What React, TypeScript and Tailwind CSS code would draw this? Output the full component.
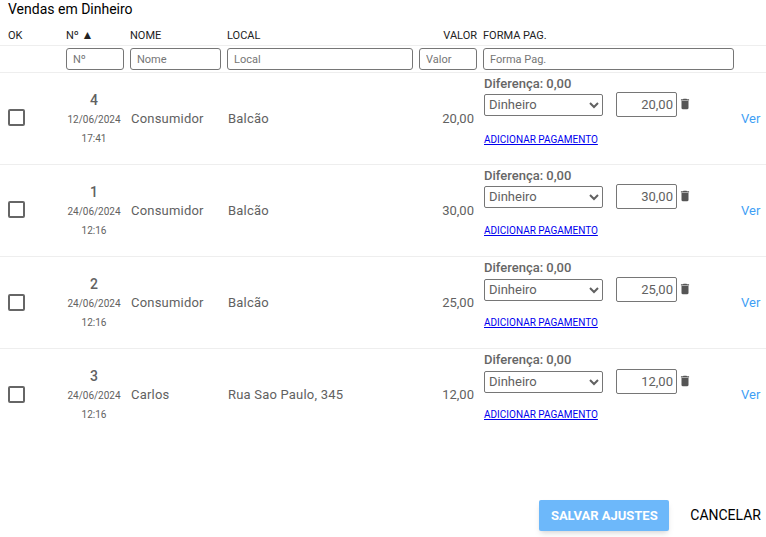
const cols = "grid grid-cols-[52px_58px_91px_186px_58px_251px_1fr] gap-x-[6px] pl-2";

const rows = [
  { n: "4", d: "12/06/2024", h: "17:41", nome: "Consumidor", local: "Balcão", v: "20,00", sel: "mt-0", link: "mt-[16px]", chk: "pb-[2px]" },
  { n: "1", d: "24/06/2024", h: "12:16", nome: "Consumidor", local: "Balcão", v: "30,00", sel: "mt-0", link: "mt-[15px]", chk: "pb-[2px]" },
  { n: "2", d: "24/06/2024", h: "12:16", nome: "Consumidor", local: "Balcão", v: "25,00", sel: "mt-[1px]", link: "mt-[14px]", chk: "pb-0" },
  { n: "3", d: "24/06/2024", h: "12:16", nome: "Carlos", local: "Rua Sao Paulo, 345", v: "12,00", sel: "mt-[1px]", link: "mt-[14px]", chk: "pb-[2px]" },
];

const filterInput =
  "w-full h-[22px] rounded-[3px] border border-[#767676] pl-[6px] text-[11px] placeholder:text-[#757575] bg-white outline-none";

function Trash() {
  return (
    <svg width="14" height="14" viewBox="0 0 24 24" fill="#555555" className="ml-[1px] mt-[-2px]">
      <path d="M6 19c0 1.1.9 2 2 2h8c1.1 0 2-.9 2-2V7H6v12zM19 4h-3.5l-1-1h-5l-1 1H5v2h14V4z" />
    </svg>
  );
}

export default function App() {
  return (
    <div className="h-[537px] w-[766px] overflow-hidden bg-white font-['Roboto',sans-serif] text-[#616161]">
      <h1 className="pl-2 pt-[1px] text-[14px] leading-[17px] font-normal text-black">Vendas em Dinheiro</h1>

      <div className={`${cols} mt-[9px] h-[19px] items-start border-b border-[#eeeeee] pt-[1px] text-[11px] leading-[15px] text-[#222222]`}>
        <div>OK</div>
        <div>
          Nº <span className="text-[12px] leading-[15px]">▲</span>
        </div>
        <div>NOME</div>
        <div>LOCAL</div>
        <div className="text-right">VALOR</div>
        <div>FORMA PAG.</div>
      </div>

      <div className={`${cols} h-[27px] items-center border-b border-[#eeeeee]`}>
        <div />
        <input className={filterInput} placeholder="Nº" />
        <input className={filterInput} placeholder="Nome" />
        <input className={filterInput} placeholder="Local" />
        <input className={filterInput} placeholder="Valor" />
        <input className={filterInput} placeholder="Forma Pag." />
      </div>

      {rows.map((r, i) => (
        <div
          key={r.n}
          className={`${cols} h-[92px] items-center ${i < 3 ? "border-b border-[#eeeeee]" : ""}`}
        >
          <div className={r.chk}>
            <div className="h-[17px] w-[17px] rounded-[2px] border-2 border-[#666666]" />
          </div>
          <div className="pr-[2px] text-center">
            <div className="text-[14px] leading-[20px] font-medium">{r.n}</div>
            <div className="text-[10px] leading-[19px]">{r.d}</div>
            <div className="text-[10px] leading-[19px]">{r.h}</div>
          </div>
          <div className="pl-[1px] text-[13px] tracking-[0.2px]">{r.nome}</div>
          <div className="pl-[1px] text-[13px] tracking-[0.2px]">{r.local}</div>
          <div className="pr-[3px] text-right text-[13px]">{r.v}</div>
          <div className="flex flex-col self-start pt-[3px]">
            <div className="ml-[1px] text-[13px] leading-[16px] font-medium text-[#666666]">Diferença: 0,00</div>
            <div className={`flex items-center ${r.sel}`}>
              <select className="ml-[1px] h-[22px] w-[119px] rounded-[2px] border border-[#767676] bg-white text-[13px] outline-none">
                <option>Dinheiro</option>
              </select>
              <input
                readOnly
                value={r.v}
                className="ml-[13px] h-[25px] w-[61px] rounded-[2px] border border-[#767676] pr-[3px] text-right text-[13px] outline-none"
              />
              <Trash />
            </div>
            <a className={`${r.link} ml-[1px] text-[10px] leading-[14px] text-[#0000ee] underline`}>ADICIONAR PAGAMENTO</a>
          </div>
          <div className="pl-[1px] text-[13px] text-[#3f9ff5]">Ver</div>
        </div>
      ))}

      <div className="mt-[59px] flex items-center justify-end pr-[5px]">
        <button className="h-[31px] w-[130px] rounded-[2px] bg-[#6db8fa] text-[13px] font-bold text-white shadow-md">
          SALVAR AJUSTES
        </button>
        <button className="ml-[21px] text-[14px] font-normal text-black">CANCELAR</button>
      </div>
    </div>
  );
}
